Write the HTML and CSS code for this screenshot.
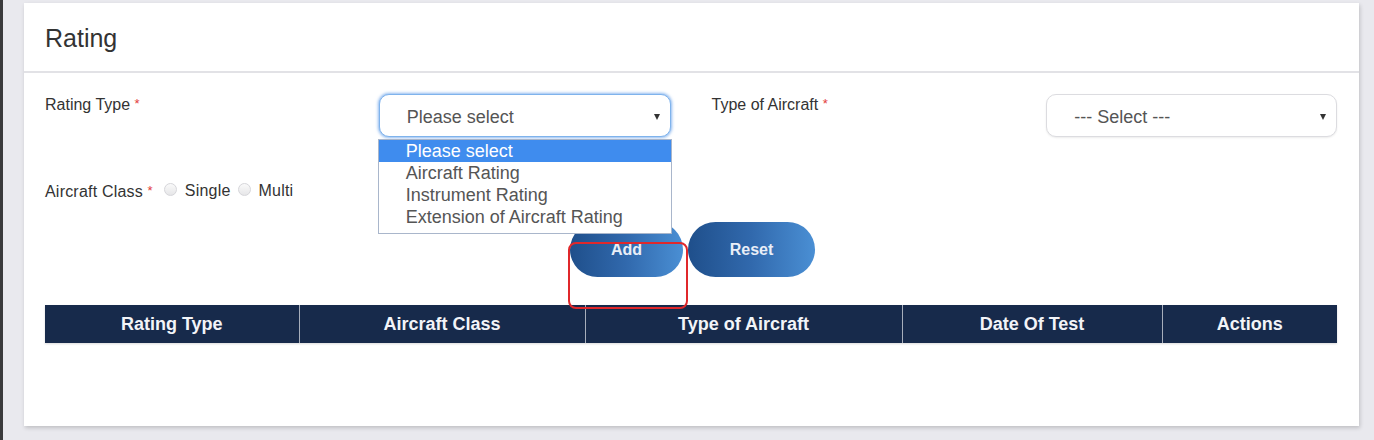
FILE: index.html
```html
<!DOCTYPE html>
<html>
<head>
<meta charset="utf-8">
<link rel="stylesheet" href="styles.css">
</head>
<body>
<div class="page">
  <div class="card">
    <div class="card-head">Rating</div>
    <div class="card-body">
      <div class="row1">
        <div class="label">Rating Type <span class="req">*</span></div>
        <div class="select-wrap">
          <div class="select focus">Please select<span class="caret"></span></div>
          <ul class="dropdown">
            <li class="active">Please select</li>
            <li>Aircraft Rating</li>
            <li>Instrument Rating</li>
            <li>Extension of Aircraft Rating</li>
          </ul>
        </div>
        <div class="label label2">Type of Aircraft <span class="req">*</span></div>
        <div class="select select2">--- Select ---<span class="caret"></span></div>
      </div>
      <div class="row2">
        <span class="label">Aircraft Class <span class="req">*</span></span>
        <span class="radio"></span><span class="opt">Single</span>
        <span class="radio"></span><span class="opt">Multi</span>
      </div>
      <div class="btn-row">
        <button class="btn btn-add">Add</button>
        <button class="btn btn-reset">Reset</button>
        <div class="annot"></div>
      </div>
      <table class="grid">
        <thead>
          <tr>
            <th class="c1">Rating Type</th>
            <th class="c2">Aircraft Class</th>
            <th class="c3">Type of Aircraft</th>
            <th class="c4">Date Of Test</th>
            <th class="c5">Actions</th>
          </tr>
        </thead>
      </table>
    </div>
  </div>
</div>
</body>
</html>
```
FILE: styles.css
```css
* { box-sizing: border-box; }
html, body { margin: 0; padding: 0; }
body {
  background: #e9e9ee;
  font-family: "Liberation Sans", Arial, sans-serif;
  color: #333;
  width: 1374px;
  height: 440px;
  overflow: hidden;
}
.page {
  border-left: 3px solid #3a3a3c;
  height: 440px;
  padding: 3px 0 0 21px;
}
.card {
  width: 1335px;
  height: 423px;
  background: #fff;
  box-shadow: 1px 2px 4px rgba(0,0,0,0.18);
}
.card-head {
  height: 70px;
  border-bottom: 2px solid #e2e2e6;
  padding: 20px 0 0 21px;
  font-size: 25px;
  line-height: 30px;
  color: #333;
}
.card-body {
  position: relative;
  padding: 0 22px 0 21px;
}
.row1 {
  display: flex;
  align-items: flex-start;
  padding-top: 21px;
}
.label {
  font-size: 16px;
  line-height: 18px;
  color: #333;
}
.row1 > .label { width: 334px; padding-top: 1px; }
.row1 > .label2 { width: 335px; margin-left: 41px; }
.req { color: #e23b3b; font-size: 13px; vertical-align: 2px; }
.select-wrap { position: relative; width: 292px; }
.select {
  position: relative;
  height: 43px;
  border: 1px solid #dcdce0;
  border-radius: 10px;
  font-size: 18px;
  line-height: 41px;
  padding: 2px 0 0 27px;
  color: #555;
  background: #fff;
}
.select.focus {
  border-color: #7fb3ec;
  box-shadow: 0 0 3px 1px rgba(102,160,233,0.75);
}
.select2 { width: 291px; box-shadow: 0 1px 2px rgba(0,0,0,0.08); }
.caret {
  position: absolute;
  right: 10px;
  top: 19px;
  width: 0; height: 0;
  border-left: 3px solid transparent;
  border-right: 3px solid transparent;
  border-top: 6px solid #333;
}
.dropdown {
  position: absolute;
  left: -1px;
  top: 45px;
  width: 294px;
  margin: 0;
  padding: 0 0 5px 0;
  list-style: none;
  background: #fff;
  border: 1px solid #a9b6cb;
  z-index: 5;
}
.dropdown li {
  font-size: 18px;
  line-height: 22px;
  height: 22px;
  padding-left: 27px;
  color: #555;
}
.dropdown li.active {
  background: #3f8cee;
  color: #fff;
}
.row2 {
  display: flex;
  align-items: center;
  margin-top: 45px;
  height: 18px;
}
.row2 > .label { letter-spacing: 0.2px; }
.radio {
  width: 13px; height: 13px;
  border-radius: 50%;
  border: 1px solid #d6d6da;
  background: linear-gradient(#fafafa, #e6e6e8);
  margin: -4px 8px 0 7px;
}
.row2 .label + .radio { margin-left: 11px; }
.opt { font-size: 16px; line-height: 18px; color: #333; letter-spacing: 0.2px; }
.btn-row {
  position: relative;
  display: flex;
  gap: 5px;
  margin-top: 22px;
  padding-left: 525px;
}
.btn {
  height: 55px;
  border: none;
  border-radius: 28px;
  background: linear-gradient(90deg, #1f4f8b 0%, #3169ad 50%, #4a8fd4 100%);
  color: #e9eef7;
  font-family: "Liberation Sans", Arial, sans-serif;
  font-weight: bold;
  font-size: 16px;
  padding: 1px 0 0 0;
}
.btn-add { width: 113px; }
.btn-reset { width: 127px; }
.annot {
  position: absolute;
  left: 523px;
  top: 20px;
  width: 120px;
  height: 67px;
  border: 2px solid #e0282b;
  border-radius: 8px;
  z-index: 6;
}
.grid {
  margin-top: 28px;
  width: 1292px;
  border-collapse: collapse;
  box-shadow: 0 1px 2px rgba(0,0,0,0.15);
}
.grid th {
  background: #172a4b;
  color: #f2f4f8;
  font-size: 18px;
  font-weight: bold;
  height: 38px;
  padding: 1px 0 0 0;
  border-left: 1px solid #a7aebb;
  text-align: center;
}
.grid th.c1 { border-left: none; width: 254px; }
.grid th.c2 { width: 286px; }
.grid th.c3 { width: 317px; }
.grid th.c4 { width: 260px; }
.grid th.c5 { width: 175px; }
```
